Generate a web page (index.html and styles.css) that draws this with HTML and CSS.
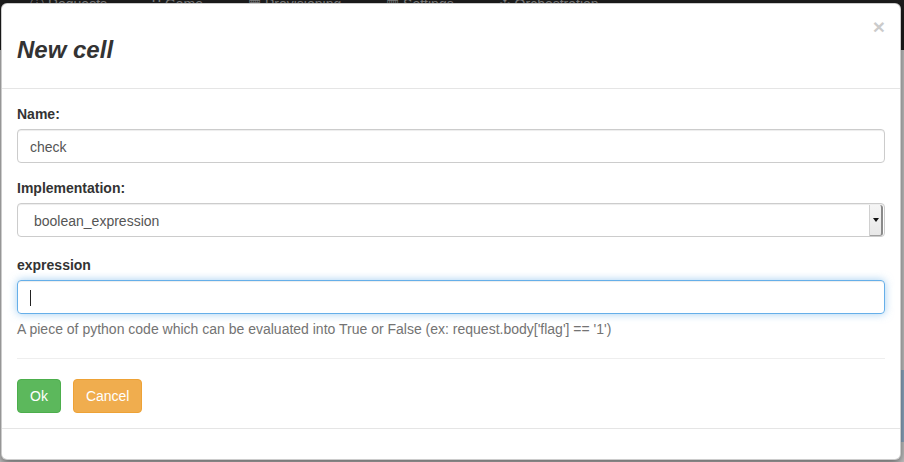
FILE: index.html
```html
<!DOCTYPE html>
<html>
<head>
<meta charset="utf-8">
<link rel="stylesheet" href="styles.css">
</head>
<body>
<div class="page">
  <div class="navbar">
    <span class="nav-item nav-first">&#9432; Requests</span>
    <span class="nav-item">&#8759; Game</span>
    <span class="nav-item">&#9638; Provisioning</span>
    <span class="nav-item">&#9637; Settings</span>
    <span class="nav-item">&#10019; Orchestration</span>
  </div>
  <div class="page-row">
    <div class="page-panel"><span class="panel-text">S</span></div>
  </div>
</div>

<div class="modal">
  <div class="modal-header">
    <span class="close">&times;</span>
    <h3 class="modal-title">New cell</h3>
  </div>
  <div class="modal-body">
    <div class="form-group">
      <label class="label">Name:</label>
      <div class="input">check</div>
    </div>
    <div class="form-group">
      <label class="label">Implementation:</label>
      <div class="select">
        <span class="select-text">boolean_expression</span>
        <span class="select-arrow"><span class="triangle"></span></span>
      </div>
    </div>
    <div class="form-group form-group-last">
      <label class="label">expression</label>
      <div class="input input-focus"><span class="caret"></span></div>
      <p class="help-block">A piece of python code which can be evaluated into True or False (ex: request.body['flag'] == '1')</p>
    </div>
    <hr class="divider">
    <div class="actions">
      <button class="btn btn-success">Ok</button>
      <button class="btn btn-warning">Cancel</button>
    </div>
  </div>
  <div class="modal-footer"></div>
</div>
</body>
</html>
```
FILE: styles.css
```css
* { box-sizing: border-box; }
html, body { margin: 0; padding: 0; }
body {
  width: 904px;
  height: 462px;
  overflow: hidden;
  background: #c2c2c2;
  font-family: "Liberation Sans", Arial, Helvetica, sans-serif;
  font-size: 14px;
  color: #333;
  position: relative;
}
.page {
  display: flex;
  flex-direction: column;
  height: 462px;
}
.navbar {
  height: 50px;
  background: #1d1d1d;
  display: flex;
  align-items: flex-start;
  color: #808080;
  font-size: 14px;
  line-height: 8px;
  white-space: nowrap;
}
.nav-item {
  margin-right: 45px;
}
.nav-first { margin-left: 30px; }
.page-row {
  display: flex;
  justify-content: flex-end;
  margin-top: 320px;
}
.page-panel {
  width: 14px;
  height: 72px;
  background: #8fa9c2;
  display: flex;
  align-items: center;
}
.panel-text {
  margin-left: 2px;
  font-weight: bold;
  color: #222;
  font-size: 12px;
}

.modal {
  position: absolute;
  left: 1px;
  top: 3px;
  width: 900px;
  background: #fff;
  border: 1px solid rgba(0,0,0,.2);
  border-radius: 6px;
  box-shadow: 0 3px 9px rgba(0,0,0,.5);
  display: flex;
  flex-direction: column;
}
.modal-header {
  padding: 15px;
  border-bottom: 1px solid #e5e5e5;
  height: 85px;
}
.close {
  float: right;
  font-size: 21px;
  font-weight: bold;
  line-height: 1;
  color: #000;
  opacity: .2;
  margin-top: -3px;
}
.modal-title {
  margin: 18px 0 10px;
  font-size: 24px;
  line-height: 26px;
  font-weight: bold;
  font-style: italic;
  color: #333;
}
.modal-body {
  padding: 15px;
}
.form-group {
  margin-bottom: 15px;
}
.form-group-last {
  padding-top: 3px;
  margin-bottom: 0;
}
.label {
  display: block;
  font-weight: bold;
  line-height: 20px;
  margin-bottom: 5px;
  color: #333;
}
.input {
  height: 34px;
  border: 1px solid #ccc;
  border-radius: 4px;
  padding: 7px 12px 5px;
  line-height: 20px;
  color: #555;
  box-shadow: inset 0 1px 1px rgba(0,0,0,.075);
  display: flex;
  align-items: center;
}
.input-focus {
  border-color: #66afe9;
  box-shadow: inset 0 1px 1px rgba(0,0,0,.075), 0 0 8px rgba(102,175,233,.6);
}
.caret {
  display: block;
  width: 1px;
  height: 16px;
  background: #222;
}
.select {
  height: 34px;
  margin-top: 1px;
  border: 1px solid #ccc;
  border-radius: 4px;
  display: flex;
  align-items: center;
  justify-content: space-between;
  padding-left: 16px;
  padding-right: 1px;
  color: #555;
  box-shadow: inset 0 1px 1px rgba(0,0,0,.075);
}
.select-text {
  padding-top: 2px;
}
.select-arrow {
  width: 14px;
  height: 31px;
  background: linear-gradient(#f5f5f5, #e8e8e8);
  border-left: 1px solid #d0d0d0;
  border-right: 2px solid #8a8a8a;
  border-bottom: 1px solid #a0a0a0;
  border-radius: 0 3px 3px 0;
  display: flex;
  align-items: center;
  justify-content: center;
}
.triangle {
  width: 0;
  height: 0;
  border-left: 3px solid transparent;
  border-right: 3px solid transparent;
  border-top: 4px solid #111;
}
.help-block {
  margin: 5px 0 10px;
  line-height: 20px;
  color: #737373;
}
.divider {
  margin: 19px 0 20px;
  border: 0;
  border-top: 1px solid #eee;
  height: 0;
}
.actions {
  display: flex;
  gap: 12px;
}
.btn {
  font-family: "Liberation Sans", Arial, Helvetica, sans-serif;
  font-size: 14px;
  line-height: 20px;
  padding: 6px 12px;
  height: 34px;
  border: 1px solid transparent;
  border-radius: 4px;
  color: #fff;
  margin: 0;
}
.btn-success {
  background: #5cb85c;
  border-color: #4cae4c;
}
.btn-warning {
  background: #f0ad4e;
  border-color: #eea236;
}
.modal-footer {
  padding: 15px;
  border-top: 1px solid #e5e5e5;
  height: 31px;
}
```
